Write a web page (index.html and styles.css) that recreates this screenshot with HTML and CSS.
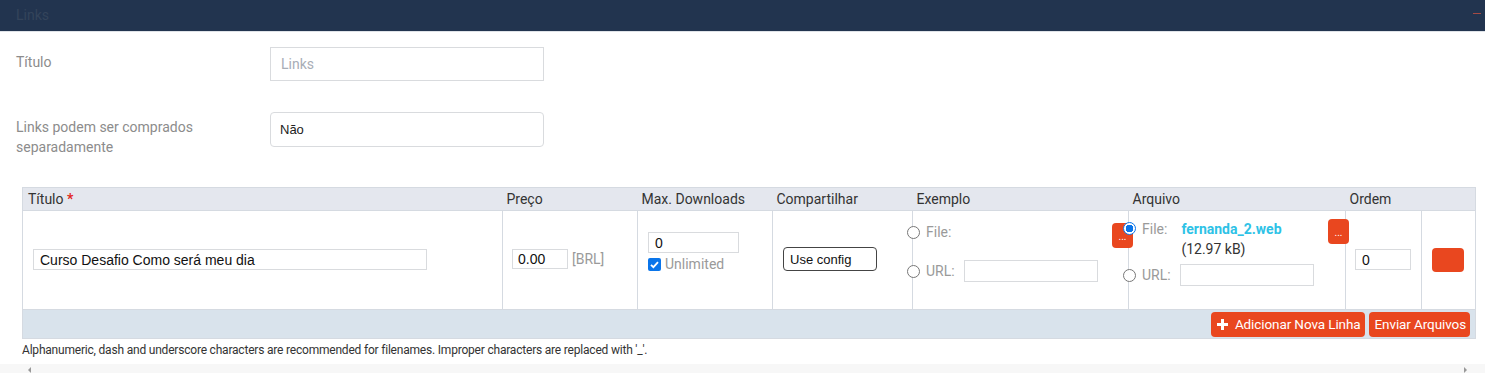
FILE: index.html
```html
<!DOCTYPE html>
<html lang="pt">
<head>
<meta charset="utf-8">
<link rel="stylesheet" href="styles.css">
</head>
<body>
<div class="topbar">
  <span class="topbar-title">Links</span>
  <span class="topbar-min"></span>
</div>
<div class="form">
  <div class="form-row">
    <label class="form-label">Título</label>
    <div class="form-field"><input class="text-input" type="text" placeholder="Links"></div>
  </div>
  <div class="form-row row2">
    <label class="form-label">Links podem ser comprados<br>separadamente</label>
    <div class="form-field"><div class="select-box">Não</div></div>
  </div>
</div>
<div class="links-wrap">
  <table class="links-table">
    <colgroup>
      <col style="width:480px"><col style="width:135px"><col style="width:135px"><col style="width:140px">
      <col style="width:216px"><col style="width:217px"><col style="width:76px"><col style="width:54px">
    </colgroup>
    <thead>
      <tr>
        <th class="th-title">Título <span class="req">*</span></th>
        <th>Preço</th>
        <th>Max. Downloads</th>
        <th>Compartilhar</th>
        <th>Exemplo</th>
        <th>Arquivo</th>
        <th>Ordem</th>
        <th></th>
      </tr>
    </thead>
    <tbody>
      <tr class="body-row">
        <td class="c-title"><div class="box title-box">Curso Desafio Como será meu dia</div></td>
        <td class="c-price"><div class="price-line"><div class="box price-box">0.00</div><span class="muted">[BRL]</span></div></td>
        <td class="c-dl">
          <div class="box dl-box">0</div>
          <div class="unl"><span class="check"><svg width="13" height="13" viewBox="0 0 13 13"><rect width="13" height="13" rx="2" fill="#0a75ea"/><path d="M3 6.8l2.4 2.4 4.6-5" fill="none" stroke="#fff" stroke-width="1.8"/></svg></span><span class="muted">Unlimited</span></div>
        </td>
        <td class="c-share"><div class="share-sel">Use config</div></td>
        <td class="c-ex">
          <div class="src">
            <div class="src-line file-line"><span class="radio"></span><span class="muted">File:</span></div>
            <div class="src-line url-line"><span class="radio"></span><span class="muted">URL:</span><div class="box url-box"></div></div>
            <span class="dots-btn ex-dots">...</span>
          </div>
        </td>
        <td class="c-file">
          <div class="src">
            <div class="src-line file-line2"><span class="radio on"></span><span class="muted lab">File:</span><div class="fileinfo"><span class="fname">fernanda_2.web</span><span class="fsize">(12.97 kB)</span></div></div>
            <div class="src-line url-line2"><span class="radio"></span><span class="muted lab">URL:</span><div class="box url-box2"></div></div>
            <span class="dots-btn file-dots">...</span>
          </div>
        </td>
        <td class="c-order"><div class="box order-box">0</div></td>
        <td class="c-act"><span class="del-btn"></span></td>
      </tr>
    </tbody>
    <tfoot>
      <tr>
        <td colspan="8" class="foot">
          <div class="foot-btns">
            <span class="btn"><svg width="11" height="11" viewBox="0 0 11 11"><path d="M5.5 0v11M0 5.5h11" stroke="#fff" stroke-width="3"/></svg>Adicionar Nova Linha</span>
            <span class="btn">Enviar Arquivos</span>
          </div>
        </td>
      </tr>
    </tfoot>
  </table>
  <p class="note">Alphanumeric, dash and underscore characters are recommended for filenames. Improper characters are replaced with '_'.</p>
</div>
<div class="hscroll">
  <span class="arr-l"></span>
  <span class="arr-r"></span>
</div>
</body>
</html>
```
FILE: styles.css
```css
* { box-sizing: border-box; }
html, body { margin: 0; padding: 0; background: #fff; }
body { font-family: Roboto, "Liberation Sans", Arial, sans-serif; font-size: 14px; color: #333; width: 1485px; height: 373px; overflow: hidden; }

.topbar { height: 32px; background: #22344f; border-bottom: 1px solid #dfe3e8; display: flex; align-items: center; justify-content: space-between; padding: 0 4px 0 16px; }
.topbar-title { color: #34445b; font-size: 14px; line-height: 1; margin-top: -2px; }
.topbar-min { width: 8px; height: 1px; background: #a34a44; margin-top: -4px; }

.form { padding: 15px 0 0 16px; }
.form-row { display: flex; }
.row2 { margin-top: 31px; }
.form-label { width: 254px; padding-top: 5px; line-height: 20px; color: #8c8c8c; font-size: 14px; }
.text-input { width: 274px; height: 34px; border: 1px solid #d9dbde; padding: 0 10px; font: 14px Roboto, sans-serif; color: #333; outline: none; }
.text-input::placeholder { color: #a8adb6; }
.select-box { width: 274px; height: 35px; border: 1px solid #d9dbde; border-radius: 4px; padding: 0 9px; display: flex; align-items: center; font-family: "Liberation Sans", Arial, sans-serif; font-size: 13px; color: #222; }

.links-wrap { padding: 30px 10px 0 22px; }
.links-table { width: 1453px; border-collapse: collapse; table-layout: fixed; border: 1px solid #d5dae1; }
.links-table th { background: #e4e7ee; height: 23px; text-align: left; font-weight: normal; font-size: 14px; color: #333; padding: 0 4px; border-bottom: 1px solid #d5dae1; }
.links-table th.th-title { padding-left: 5px; }
.req { color: #e2261d; font-weight: bold; }
.body-row td { height: 98px; border-left: 1px solid #d5dae1; vertical-align: top; padding: 0; }
.body-row td:first-child { border-left: none; }

.box { border: 1px solid #d9dbde; height: 21px; display: flex; align-items: center; padding: 0 6px; font-family: "Liberation Sans", Arial, sans-serif; font-size: 14px; color: #111; }
.muted { color: #9a9a9a; }

.title-box { width: 394px; margin: 38px 0 0 10px; }
.price-line { display: flex; align-items: center; gap: 4px; margin: 38px 0 0 9px; }
.price-box { width: 56px; padding-left: 5px; height: 20px; }
.dl-box { width: 91px; margin: 21px 0 0 10px; }
.unl { display: flex; align-items: center; gap: 4px; margin: 3px 0 0 10px; line-height: 16px; }
.check { display: flex; width: 13px; height: 13px; }
.share-sel { width: 94px; height: 24px; border: 1px solid #444; border-radius: 4px; margin: 36px 0 0 10px; padding: 0 6px; display: flex; align-items: center; font-family: "Liberation Sans", Arial, sans-serif; font-size: 13px; color: #111; }

.src { position: relative; height: 98px; display: flow-root; }
.src-line { display: flex; align-items: center; gap: 6px; margin-left: -6px; }
.radio { width: 13px; height: 13px; border: 1px solid #777; border-radius: 50%; background: #fff; flex: none; }
.radio.on { border: 1px solid #0a75ea; background: radial-gradient(circle, #0a75ea 0 3.6px, #fff 4px); }
.file-line { margin-top: 13px; }
.url-line { margin-top: 20px; }
.url-box { width: 134px; margin-left: 3px; height: 22px; }
.file-line2 { margin-top: 10px; align-items: flex-start; }
.file-line2 .radio { margin-top: 1px; }
.fileinfo { display: flex; flex-direction: column; margin-left: 8px; line-height: 20px; margin-top: -2px; }
.fname { color: #2ec2e6; font-weight: bold; }
.fsize { color: #333; }
.url-line2 { margin-top: 5px; }
.url-box2 { width: 134px; margin-left: 3px; height: 22px; }
.dots-btn { position: absolute; width: 21px; height: 25px; background: #e9471f; border-radius: 4px; color: #fff; font-size: 10px; display: flex; justify-content: center; align-items: flex-end; padding-bottom: 6px; line-height: 1; }
.ex-dots { left: 199px; top: 12px; }
.file-dots { left: 199px; top: 8px; }
.order-box { width: 56px; margin: 38px 0 0 9px; }
.del-btn { display: block; width: 32px; height: 24px; background: #e9471f; border-radius: 4px; margin: 37px 0 0 10px; }

.foot { background: #d9e3ec; height: 29px; border-top: 1px solid #d5dae1; padding: 0 5px 0 0; }
.foot-btns { display: flex; justify-content: flex-end; gap: 4px; }
.btn { display: inline-flex; align-items: center; gap: 7px; height: 25px; background: #e9471f; color: #fff; border-radius: 4px; padding: 0 4px 0 6px; font-size: 13.5px; letter-spacing: -0.1px; }

.note { margin: 4px 0 0 0; font-size: 12px; color: #333; letter-spacing: -0.2px; line-height: 14px; }
.hscroll { margin-top: 7px; height: 11px; background: #f7f7f7; position: relative; display: flex; justify-content: space-between; align-items: center; padding: 0 18px 0 28px; }
.arr-l { width: 0; height: 0; border-top: 3px solid transparent; border-bottom: 3px solid transparent; border-right: 3px solid #999; }
.arr-r { width: 0; height: 0; border-top: 3px solid transparent; border-bottom: 3px solid transparent; border-left: 3px solid #999; }
```
